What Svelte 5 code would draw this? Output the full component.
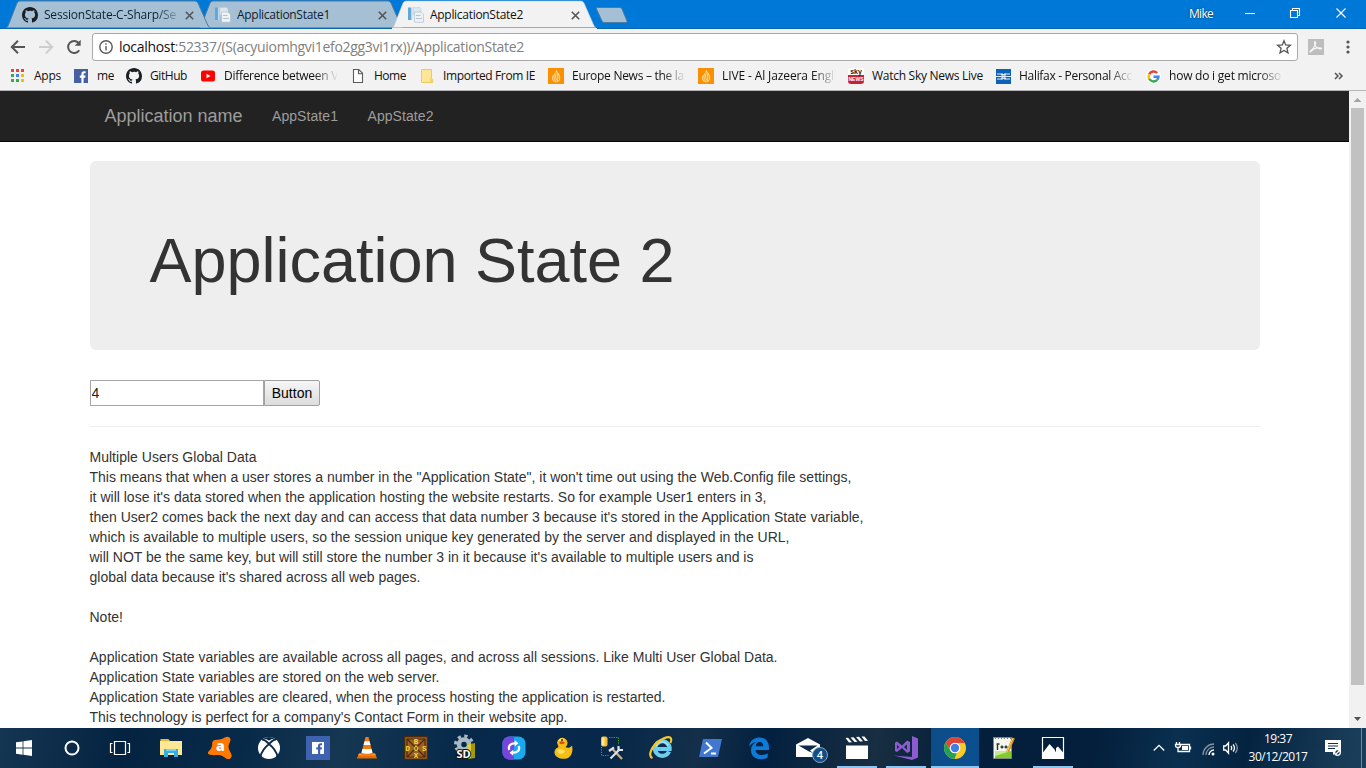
<script>
  const tabs = [
    { title: 'SessionState-C-Sharp/Se', icon: 'github', width: 132, fade: true },
    { title: 'ApplicationState1', icon: 'doc', width: 93 },
    { title: 'ApplicationState2', icon: 'doc', width: 93, active: true }
  ];

  const bookmarks = [
    { name: 'Apps', icon: 'apps', cell: 64, lead: 24, width: 27 },
    { name: 'me', icon: 'fb', cell: 52, lead: 23, width: 17 },
    { name: 'GitHub', icon: 'github', cell: 74, lead: 24, width: 37 },
    { name: 'Difference between V', icon: 'youtube', cell: 152, lead: 24, width: 114, fade: true },
    { name: 'Home', icon: 'page', cell: 69, lead: 22, width: 32 },
    { name: 'Imported From IE', icon: 'folder', cell: 127, lead: 22, width: 92 },
    { name: 'Europe News – the la', icon: 'aj', cell: 150, lead: 24, width: 112, fade: true },
    { name: 'LIVE - Al Jazeera Engl', icon: 'aj', cell: 150, lead: 24, width: 112, fade: true },
    { name: 'Watch Sky News Live', icon: 'sky', cell: 148, lead: 24, width: 111 },
    { name: 'Halifax - Personal Acc', icon: 'halifax', cell: 150, lead: 23, width: 113, fade: true },
    { name: 'how do i get microso', icon: 'google', cell: 150, lead: 23, width: 112, fade: true }
  ];

  const lines = [
    ['Multiple Users Global Data', 167],
    ['This means that when a user stores a number in the "Application State", it won\'t time out using the Web.Config file settings,', 762],
    ['it will lose it\'s data stored when the application hosting the website restarts. So for example User1 enters in 3,', 677],
    ['then User2 comes back the next day and can access that data number 3 because it\'s stored in the Application State variable,', 774],
    ['which is available to multiple users, so the session unique key generated by the server and displayed in the URL,', 700],
    ['will NOT be the same key, but will still store the number 3 in it because it\'s available to multiple users and is', 664],
    ['global data because it\'s shared across all web pages.', 331],
    ['', 0],
    ['Note!', 33.5],
    ['', 0],
    ['Application State variables are available across all pages, and across all sessions. Like Multi User Global Data.', 688],
    ['Application State variables are stored on the web server.', 350],
    ['Application State variables are cleared, when the process hosting the application is restarted.', 576],
    ['This technology is perfect for a company\'s Contact Form in their website app.', 478]
  ];

  const system = ['start', 'cortana', 'taskview'];
  const pinned = [
    { icon: 'explorer' }, { icon: 'avast' }, { icon: 'xbox' }, { icon: 'fbtile' }, { icon: 'vlc' },
    { icon: 'dosbox' }, { icon: 'sd' }, { icon: 'sync' }, { icon: 'duck' }, { icon: 'tools' },
    { icon: 'ie' }, { icon: 'powershell' }, { icon: 'edge' }, { icon: 'mail', badge: '4' },
    { icon: 'clapper', open: true }, { icon: 'vs', open: true }, { icon: 'chrome', open: true, active: true },
    { icon: 'notepad' }, { icon: 'photos', open: true }
  ];

  // Tracks the text so that it fills the given width.
  function fit(node, width) {
    if (!width) return;
    const range = document.createRange();
    range.selectNodeContents(node);
    const natural = range.getBoundingClientRect().width;
    node.style.letterSpacing = `${(width - natural) / node.textContent.length}px`;
  }
</script>

{#snippet glyph(name)}
  {#if name === 'github'}
    <svg class="i16" viewBox="0 0 16 16"><path fill="#1b1f23" d="M8 0C3.58 0 0 3.58 0 8c0 3.54 2.29 6.53 5.47 7.59.4.07.55-.17.55-.38 0-.19-.01-.82-.01-1.49-2.01.37-2.53-.49-2.69-.94-.09-.23-.48-.94-.82-1.13-.28-.15-.68-.52-.01-.53.63-.01 1.08.58 1.23.82.72 1.21 1.87.87 2.33.66.07-.52.28-.87.51-1.07-1.78-.2-3.64-.89-3.64-3.95 0-.87.31-1.59.82-2.15-.08-.2-.36-1.02.08-2.12 0 0 .67-.21 2.2.82A7.6 7.6 0 0 1 8 3.86c.68 0 1.36.09 2 .27 1.53-1.04 2.2-.82 2.2-.82.44 1.1.16 1.92.08 2.12.51.56.82 1.27.82 2.15 0 3.07-1.87 3.75-3.65 3.95.29.25.54.73.54 1.48 0 1.07-.01 1.93-.01 2.2 0 .21.15.46.55.38A8 8 0 0 0 16 8c0-4.42-3.58-8-8-8z"/></svg>
  {:else if name === 'doc'}
    <svg class="i16" viewBox="0 0 16 16"><path fill="#62a8d6" d="M0 .5h3v12.500H0z"/><path fill="#b9dcf2" d="M3 .5h1.500V13H3z"/><path fill="#dbe6ef" stroke="#b9cad8" stroke-width=".5" d="M5 .5h7L13 2v6H5z"/><path fill="#eef2f6" stroke="#a9b8c5" stroke-width=".6" d="M6.500 5h6.500l2.500 2.500v7.700h-9z"/><path stroke="#b5c4d2" d="M8 8.500h4.500M8 11.500h6"/></svg>
  {:else if name === 'apps'}
    <svg class="i14" viewBox="0 0 14 14"><path fill="#ea4335" d="M1 0h3v3H1zM6 0h3v3H6zM11 0h3v3h-3z"/><path fill="#34a853" d="M1 5h3v3H1zM1 10h3v3H1z"/><path fill="#4285f4" d="M6 5h3v3H6z"/><path fill="#34a853" d="M6 10h3v3H6z"/><path fill="#fbbc05" d="M11 5h3v3h-3zM11 10h3v3h-3z"/></svg>
  {:else if name === 'fb'}
    <svg class="i14" viewBox="0 0 14 14"><path fill="#4460a0" d="M0 0h14v14H0z"/><path fill="#fff" d="M7.400 14V8.700H5.800V6.500h1.600V5c0-1.700 1-2.700 2.600-2.700h1.600v2h-1c-.8 0-1 .4-1 1v1.200h2l-.3 2.200H9.600V14z"/></svg>
  {:else if name === 'youtube'}
    <svg class="i16" viewBox="0 0 16 16"><rect x="1" y="2.500" width="14" height="11" rx="2.600" fill="#f00"/><path fill="#fff" d="M6.500 5.700v4.600l4-2.300z"/></svg>
  {:else if name === 'page'}
    <svg class="i14" viewBox="0 0 14 14"><path fill="#fff" stroke="#5a5a5a" stroke-width="1.100" d="M1.500.5h5.300l3.700 3.700v9.300h-9zM6.500.7v4h4"/></svg>
  {:else if name === 'folder'}
    <svg class="i14" viewBox="0 0 14 14"><path fill="#ffe594" stroke="#eacb62" d="M.5.5h10v9l1.200.8v3.200H.5z"/><path fill="none" stroke="#e9c552" d="M10 9.500v4"/></svg>
  {:else if name === 'aj'}
    <svg class="i16" viewBox="0 0 16 16"><path fill="#fa9000" d="M0 0h16v16H0z"/><path fill="#ffd28a" d="M8.300 1.500c1 2.500 4.200 5 4 8.200-.1 2.300-1.800 4.600-4.100 4.900-2.600-.3-4.400-2.500-4.300-4.800.1-2.200 2.200-3 3.100-5z"/><path fill="none" stroke="#fa9000" stroke-width=".8" d="M8.200 4c-1 2 1.500 4 0 6s1 2.500 0 4M6 7.500c1 2-1.500 3 .5 5M10.500 7.500c-1 2 1 3-.5 5"/></svg>
  {:else if name === 'sky'}
    <svg class="i16" viewBox="0 0 16 16"><rect width="16" height="16" rx="3" fill="#fff"/><path fill="#cb2030" d="M0 7h16v6q0 3-3 3H3q-3 0-3-3z"/><text x="8" y="5.500" class="skytop">sky</text><text x="8" y="13" class="skybot">NEWS</text></svg>
  {:else if name === 'halifax'}
    <svg class="i15" viewBox="0 0 15 15"><path fill="#0a63b7" d="M0 0h15v15H0z"/><path fill="none" stroke="#dcebf9" stroke-width="1.100" d="M1 5h4l1.500 2M14 5h-4L8.500 7M0 7.500h15M1 10h4l1.500-2M14 10h-4L8.500 8M5.500 4.500L7.500 6l2-1.500M5.500 10.500L7.500 9l2 1.500"/></svg>
  {:else if name === 'google'}
    <svg class="i15" viewBox="0 0 15 15"><circle cx="7.500" cy="7.500" r="7.500" fill="#fff"/><g fill="none" stroke-width="2.400"><path stroke="#ea4335" d="M3.200 5.200A4.900 4.900 0 0 1 11.200 4"/><path stroke="#fbbc05" d="M3.200 5.200a4.900 4.900 0 0 0 0 4.600"/><path stroke="#34a853" d="M3.200 9.800a4.900 4.900 0 0 0 7.700 1.300"/><path stroke="#4285f4" d="M10.900 11.100a4.900 4.900 0 0 0 1.600-3.300H7.500"/></g></svg>
  {/if}
{/snippet}

{#snippet app(name)}
  <svg class="i24" viewBox="0 0 24 24">
    {#if name === 'start'}
      <path fill="#fff" d="M4 6.300l6.600-.9v6.200H4zM11.400 5.300L20 4v7.600h-8.600zM4 12.400h6.600v6.300L4 17.800zM11.400 12.400H20V20l-8.600-1.200z"/>
    {:else if name === 'cortana'}
      <circle cx="12" cy="12" r="6.500" fill="none" stroke="#fff" stroke-width="2"/>
    {:else if name === 'taskview'}
      <path fill="none" stroke="#fff" stroke-width="1.200" d="M6.500 5.500h11v13h-11zM4.500 7.500h-2v9h2M19.500 7.500h2v9h-2"/>
    {:else if name === 'explorer'}
      <path fill="#e8bb3c" d="M1.500 3h8l1.500 2H22v3H1.500z"/><path fill="#ffe793" d="M1 5h22v14H1z"/><path fill="#35aee4" d="M5 13h14v8h-4v-4H9v4H5z"/><path fill="#79d0f2" d="M7 13h10v2H7z"/>
    {:else if name === 'avast'}
      <path fill="#ff7800" d="M.5 15.500C3.500 13 4.500 10 4.200 7c.3-2.500 2-3.300 5-3.200 3 .2 5.500-1 8-2.500C20-.3 23 1.500 22.500 4c-.3 2.500-2 4-2 7 .1 3.500 3 5.500 3.200 8.500 0 3.500-3.500 4.600-6 2.700-2.500-2-4.700-3.500-8-3.200-3 .2-6 .3-8.500-.5C-.5 18-.3 16.300.5 15.500z"/><text x="12.300" y="15.300" class="avast">a</text>
    {:else if name === 'xbox'}
      <circle cx="12" cy="12" r="11" fill="#fff"/><path fill="#0c2a48" d="M5.700 3C8 2.300 10 3.400 12 4.600 14 3.400 16 2.300 18.300 3c-3-2.700-9.600-2.700-12.600 0z"/><path fill="none" stroke="#0c2a48" stroke-width="1.900" d="M3.500 20.500c1-4.700 4.800-9.500 8.500-12.500 3.700 3 7.500 7.800 8.500 12.500M5 3.500c3 0 5 2.500 7 4.500 2-2 4-4.500 7-4.500"/>
    {:else if name === 'fbtile'}
      <path fill="#3f62b0" d="M0 0h24v24H0z"/><path fill="#fff" d="M6 6h12v12H6z"/><path fill="#3f62b0" d="M12 18v-4.500h-1.700v-2.200H12V10c0-1.800 1-2.800 2.700-2.800H16v2h-1c-.7 0-.8.400-.8.900v1.200H16l-.3 2.200h-1.500V18z"/>
    {:else if name === 'vlc'}
      <path fill="#e46b00" d="M4 17.500h16l2.200 5H1.800z"/><path fill="#ff9c2b" d="M4 17.500h16l.8 2H3.200z"/><path fill="#f37a10" d="M10.500 1h3L18 18.500c-3 2-9 2-12 0z"/><path fill="#fff" d="M9.600 5.200h4.900l1 3.900H8.600zM7.500 13h9l1 3.700c-3 1.500-8 1.500-11 0z"/>
    {:else if name === 'dosbox'}
      <path fill="#9b6127" d="M0 0h24v24H0z"/><path fill="none" stroke="#4e2909" stroke-width="1.200" d="M.6.6h22.800v22.800H.6zM3 3h18v18H3zM3 3l18 18M21 3L3 21"/><text x="12" y="7.500" class="dos">B</text><text x="12" y="14.500" class="dos" textLength="21">DOS</text><text x="12" y="21.500" class="dos">X</text>
    {:else if name === 'sd'}
      <g fill="none" stroke="#a9bac4"><circle cx="11" cy="8.500" r="5" stroke-width="4.500"/><circle cx="11" cy="8.500" r="8.500" stroke-width="3" stroke-dasharray="3.300 3.370"/></g><path fill="#a8960e" d="M15 8.500l7-1.500v15l-7 1z"/><path fill="#dccf3c" d="M15 8.500l3-.7V22l-3 .5z"/><text x="10.500" y="21.500" class="sd">SD</text>
    {:else if name === 'sync'}
      <rect x=".5" y=".5" width="23" height="23" rx="7" fill="#19a9ee"/><path fill="#7a43dc" d="M12 .5v23H7.500a7 7 0 0 1-7-7v-9a7 7 0 0 1 7-7z"/><path fill="none" stroke="#fff" stroke-width="2.300" d="M13.500 7.300C8.500 7 5.800 10 7.300 14M10.500 16.700c5 .3 7.700-2.700 6.200-6.700"/><path fill="#fff" d="M12.700 4.300L16.500 7.300l-3.800 3zM11.300 13.700L7.500 16.700l3.800 3z"/>
    {:else if name === 'duck'}
      <path fill="#f5bd16" d="M6 6.500a5.300 5.300 0 1 1 8.500 4.800c3 1 4.500.5 6.500-1.800 1.500 5.500-.5 13.300-7.500 13.300C6.500 23 3 19.500 3.500 15.500 4 13 6 11.800 7.500 11z"/><path fill="#ffe15e" d="M7.500 5a3 3 0 0 1 5-2c1 1 .5 2-1 2zM6 14c2-1 6-1 8 1-1 3-5 4-7 2z"/><path fill="#df4b13" d="M8.500 5.800c2.500-1.300 4.500 0 5.500 1-1.500 1.500-4 2-5.500.7z"/><circle cx="11" cy="4" r="1" fill="#222"/>
    {:else if name === 'tools'}
      <path fill="none" stroke="#4fa82c" stroke-dasharray="1.200 1.200" d="M9 1.500h9.500V9M1.500 11v8.500H9"/><rect x="1" y=".5" width="6.500" height="10" rx="2" fill="#f4bc32"/><path fill="#ffe693" d="M2 1.500h2.500v8H2z"/><path stroke="#c9b08a" stroke-width="2.200" d="M12.500 13L22 23"/><path stroke="#dde2e6" stroke-width="2.200" d="M20 13L10.500 22.500"/><path fill="none" stroke="#dde2e6" stroke-width="2.200" d="M9 15l5-3.500M18.500 10v4H23"/>
    {:else if name === 'ie'}
      <path fill="none" stroke="#6bcdf0" stroke-width="4.200" d="M20 15.500A7.300 7.300 0 1 1 20.600 13H7"/><path fill="none" stroke="#b4e9f9" stroke-width="1.300" d="M7 10.500a6.500 6.500 0 0 1 12-1"/><path fill="none" stroke="#f5c72b" stroke-width="2.200" d="M3.500 22C-2 20 3 9.500 11 4.500c4-2.600 9.500-5 11-2 .7 1.400.2 3-.5 4.500"/>
    {:else if name === 'powershell'}
      <path fill="#4277cf" d="M5 3h19l-4 18H1z"/><path fill="none" stroke="#fff" stroke-width="2" d="M8 6.500l5.500 5.500L6 17.500M13 17.500h5"/>
    {:else if name === 'edge'}
      <path fill="#0d7bd8" d="M2 10.500C3 5 6.800 1.500 12 1.500c6.500 0 10 4.500 10 10v2.500H8.500c.2 3.500 3 5 6.200 5 2.300 0 4.300-.7 6-1.700v4.200c-2 1.200-4.500 1.700-7 1.700-5.800 0-9.700-3.500-9.700-9 0-4 2-6.800 5.500-8.300C7.300 6 4 7.500 2 10.500zm6.700-.2h7.600C16.200 7.500 15 6 12.700 6c-2.200 0-3.700 1.700-4 4.300z"/>
    {:else if name === 'mail'}
      <path fill="#fff" d="M0 8.500L12 2l12 6.500V21H0z"/><path fill="#0c2a48" d="M2.500 9.500h19L14 14.500l3 2.500-4.500-1.800z"/>
    {:else if name === 'clapper'}
      <path fill="#fff" d="M1 9.500h22V23H1zM.5 2L3 1.700l4 4.500-3 .3zM5.500 1.500l3-.2 4 4.500-3 .2zM11 1l3-.2 4 4.500-3 .2zM16.500.6l3-.2 3.500 4.300-3 .2z"/>
    {:else if name === 'vs'}
      <path fill="#8c5bd0" fill-rule="evenodd" d="M18 0l6 2.500v19L18 24 0 19.500 18 21zM1 6.500l2-1 5 4 5-5 3 1.500v9.500L13 17l-5-5-5 4-2-1zm2 2.500v4l2.300-2zm10-.5L10 11l3 2.700z"/>
    {:else if name === 'chrome'}
      <circle cx="12" cy="12" r="11" fill="#f8cb25"/><path fill="#dc4638" d="M2.500 6.500a11 11 0 0 1 19 0L22 7H12a5 5 0 0 0-4.700 6.700z"/><path fill="#22a05a" d="M2.500 6.500L7.300 14.200a5 5 0 0 0 6.500 2.600L11.500 23A11 11 0 0 1 2.500 6.500z"/><circle cx="12" cy="12" r="5.300" fill="#fff"/><circle cx="12" cy="12" r="4.200" fill="#427ee8"/>
    {:else if name === 'notepad'}
      <path fill="#f5f7ef" stroke="#7d8788" d="M1.500 1.500h18v21h-18z"/><path fill="#80cc28" d="M3 15h16v7H3z"/><path fill="#c5e994" d="M3 15h16L3 20z"/><path stroke="#777" stroke-dasharray="1 2" d="M3 2.500h16"/><path stroke="#263329" stroke-width="1.400" d="M5.500 7.500V14M4.500 8h3M8.500 11h3M10 9.500v3M12.500 11h3M14 9.500v3"/><path stroke="#d78f20" stroke-width="3" d="M21.500 2l-6 14"/><path stroke="#f8d255" d="M21 2l-6 14"/>
    {:else if name === 'photos'}
      <path fill="none" stroke="#fff" stroke-width="1.200" d="M1.500 1.500h21v21h-21z"/><path fill="#fff" d="M2 16.500L8.500 8l5.500 6v1.500h1V12l2-1.500 5.500 6.500v5H2z"/>
    {/if}
  </svg>
{/snippet}

<div class="screen">
  <header class="titlebar">
    <div class="tabs">
      {#each tabs as tab}
        <div class="tab" class:active={tab.active}>
          <svg class="shape" viewBox="0 0 205 28"><path d="M0 27.500C1.500 27.500 2 26 3 23.500L11 3Q12 1 14 1H189Q191 1 192 3L201 23.500Q202.500 27.500 204 27.500"/></svg>
          <span class="tabicon">{@render glyph(tab.icon)}</span>
          <span class="tabtitle" class:fade={tab.fade}><span use:fit={tab.width}>{tab.title}</span></span>
          <svg class="close" viewBox="0 0 9 9"><path d="M.8.8l7.400 7.400M8.200.8L.8 8.200"/></svg>
        </div>
      {/each}
      <svg class="newtab" viewBox="0 0 34 17"><path d="M2 .5h23q1.500 0 2 1.500l5 12q.5 1.500-1 1.500H9q-1.500 0-2-1.500L1.500 2Q1 .5 2 .5z"/></svg>
    </div>
    <div class="window">
      <span class="user"><span use:fit={24}>Mike</span></span>
      <svg viewBox="0 0 12 12"><path d="M1 6.500h10"/></svg>
      <svg viewBox="0 0 12 12"><path d="M1.500 3.500h7v7h-7zM3.500 3V1.500h7v7H9"/></svg>
      <svg viewBox="0 0 12 12"><path d="M1.500 1.500l9 9M10.500 1.500l-9 9"/></svg>
    </div>
  </header>

  <div class="toolbar">
    <svg class="nav" viewBox="0 0 16 16"><path d="M15 8H2M8 1.800L1.800 8 8 14.200"/></svg>
    <svg class="nav off" viewBox="0 0 16 16"><path d="M1 8h13M8 1.800L14.200 8 8 14.200"/></svg>
    <svg class="nav reload" viewBox="0 0 16 16"><path d="M13.200 11.200A6 6 0 1 1 12.600 4"/><path class="solid" d="M14.700.8v6H8.700z"/></svg>
    <div class="omnibox">
      <svg class="info" viewBox="0 0 14 14"><circle cx="7" cy="7" r="6.200"/><path d="M7 6v4.500M7 3.300v1.500"/></svg>
      <span class="url"><span use:fit={405}><b>localhost</b>:52337/(S(acyuiomhgvi1efo2gg3vi1rx))/ApplicationState2</span></span>
      <svg class="star" viewBox="0 0 14 14"><path d="M7 .8l1.700 4.100 4.700.4-3.500 3 1.100 4.600L7 10.500l-4 2.400 1.100-4.600-3.500-3 4.700-.4z"/></svg>
    </div>
    <svg class="pdf" viewBox="0 0 16 16"><path fill="#bdbdbd" d="M0 0h16v16H0z"/><path fill="none" stroke="#f5f5f5" stroke-width="1.200" d="M7 2.500c2 0 0 6-4.500 9.500-1 .8-.5 1.500.5.500 2-2.500 6-4 10-3.500 1.500.4 0 1.500-2 .7C8 8.500 6.500 6 6.500 3.500z"/></svg>
    <svg class="menu" viewBox="0 0 4 14"><circle cx="2" cy="2" r="1.600"/><circle cx="2" cy="7" r="1.600"/><circle cx="2" cy="12" r="1.600"/></svg>
  </div>

  <div class="bookmarks">
    {#each bookmarks as mark}
      <div class="mark" style:width="{mark.cell}px">
        <span class="markicon" style:width="{mark.lead}px">{@render glyph(mark.icon)}</span>
        <span class="marktext" class:fade={mark.fade}><span use:fit={mark.width}>{mark.name}</span></span>
      </div>
    {/each}
    <svg class="more" viewBox="0 0 9 8"><path d="M1 1l3 3-3 3M5 1l3 3-3 3"/></svg>
  </div>

  <div class="viewport">
    <div class="page">
      <nav class="navbar">
        <span class="brand"><span use:fit={138}>Application name</span></span>
        <span class="link"><span use:fit={66}>AppState1</span></span>
        <span class="link"><span use:fit={66}>AppState2</span></span>
      </nav>
      <main class="container">
        <section class="jumbotron"><h1><span use:fit={525}>Application State 2</span></h1></section>
        <div class="form"><input value="4" /><button>Button</button></div>
        <hr />
        {#each lines as [text, width]}
          <p><span use:fit={width}>{text}</span></p>
        {/each}
      </main>
    </div>
    <div class="scrollbar">
      <svg viewBox="0 0 17 17"><path fill="#a3a3a3" d="M4.500 11h8l-4-4z"/></svg>
      <div class="thumb"></div>
      <svg viewBox="0 0 17 17"><path fill="#505050" d="M5 6h7l-3.500 4z"/></svg>
    </div>
  </div>

  <footer class="taskbar">
    {#each system as name}
      <div class="sys">{@render app(name)}</div>
    {/each}
    <div class="pins">
      {#each pinned as item}
        <div class="pin" class:open={item.open} class:current={item.active}>
          {@render app(item.icon)}
          {#if item.badge}<span class="badge">{item.badge}</span>{/if}
        </div>
      {/each}
    </div>
    <div class="tray">
      <svg class="chev" viewBox="0 0 12 12"><path d="M.8 8.500L6 3.300l5.200 5.200"/></svg>
      <svg class="batt" viewBox="0 0 16 12"><path d="M6 2.500h8.500v7h-8M15.500 4.500v3M1.500 0v2.500M4.500 0v2.500M.5 2.500h5v1q0 2-2.500 2t-2.500-2zM3 5.500v4h3.500"/><path class="fill" d="M7 4h6v4H7z"/></svg>
      <svg class="wifi" viewBox="0 0 13 13"><path class="dim" d="M1 12A11 11 0 0 1 12 1M4 12a8 8 0 0 1 8-8"/><path d="M7 12a5 5 0 0 1 5-5"/><circle class="fill" cx="11" cy="11" r="1.500"/></svg>
      <svg class="vol" viewBox="0 0 16 12"><path d="M.7 4h2L5.500.8v10.400L2.700 8h-2zM8 4q1.500 2 0 4M10 2.500q3 3.500 0 7"/><path class="dim" d="M12.300 1q4 5 0 10"/></svg>
      <div class="clock"><span><span use:fit={28}>19:37</span></span><span><span use:fit={59}>30/12/2017</span></span></div>
      <svg class="note" viewBox="0 0 16 16"><path fill="#fff" d="M0 0h16v12h-4l-4 3v-3H0z"/><path stroke="#12314d" stroke-width="1.200" d="M3 3.500h10M3 6h10M3 8.500h7"/><circle cx="12.500" cy="12.500" r="2.800" fill="#12314d" stroke="#fff"/><path stroke="#fff" d="M10.500 14.500l4-4"/></svg>
    </div>
    <div class="peek"></div>
  </footer>
</div>

<style>
  :global(body) { overflow: hidden; background: #fff; }
  * { box-sizing: border-box; }
  svg { display: block; flex: none; overflow: visible; }
  .screen { width: 1366px; height: 768px; display: flex; flex-direction: column; font: 12px/16px "Open Sans", "Noto Sans", sans-serif; color: #111; white-space: nowrap; overflow: hidden; }
  .i24 { width: 24px; height: 24px; }
  .i16 { width: 16px; height: 16px; }
  .i15 { width: 15px; height: 15px; }
  .i14 { width: 14px; height: 14px; }

  .titlebar { height: 29px; flex: none; background: #0078d7; display: flex; justify-content: space-between; border-bottom: 1px solid #0a64ae; position: relative; }
  .tabs { display: flex; padding-left: 6px; }
  .tab { width: 204px; height: 28px; margin-right: -11px; padding: 2px 0 0 16px; position: relative; z-index: 1; display: flex; align-items: center; color: #0d222f; }
  .tab + .tab { z-index: 0; }
  .tab.active { z-index: 2; color: #111; height: 29px; padding-bottom: 1px; }
  .shape { position: absolute; left: 0; top: 0; width: 205px; height: 28px; }
  .shape path { fill: #a5c0d4; stroke: #4e7ba0; stroke-width: 1; }
  .active .shape { height: 29px; border-bottom: 1px solid #f2f2f2; }
  .tab.active .shape path { fill: #f2f2f2; stroke: #b9cddf; stroke-width: .6; }
  .tabicon { width: 22px; position: relative; }
  .tabtitle { width: 132px; margin-right: 9px; position: relative; overflow: hidden; }
  .fade { -webkit-mask-image: linear-gradient(to right, #000 calc(100% - 24px), transparent); mask-image: linear-gradient(to right, #000 calc(100% - 24px), transparent); }
  .tabtitle.fade { -webkit-mask-image: linear-gradient(to right, #000 calc(100% - 20px), #0004); mask-image: linear-gradient(to right, #000 calc(100% - 20px), #0004); }
  .close { width: 9px; height: 9px; position: relative; }
  .close path { stroke: #555; stroke-width: 1.600; }
  .newtab { width: 34px; height: 17px; margin: 7px 0 0 10px; fill: #a5c0d4; stroke: #4e7ba0; }
  .window { display: flex; align-items: center; width: 177px; padding: 0 0 2px; }
  .window svg { width: 12px; height: 12px; fill: none; stroke: #fff; stroke-width: 1.100; margin-right: 33px; }
  .user { width: 55px; color: #fff; padding-top: 2px; text-shadow: 0 0 2px #123; }
  .window svg:last-child { margin-right: 0; margin-left: 1px; }

  .toolbar { height: 33px; flex: none; background: #f2f2f2; display: flex; align-items: center; padding: 3px 0 0 10px; }
  .nav { width: 16px; height: 16px; margin-right: 12px; fill: none; stroke: #555; stroke-width: 2; }
  .nav.off { stroke: #cecece; }
  .nav.reload { margin-right: 10px; }
  .nav .solid { fill: #555; stroke: none; }
  .omnibox { width: 1206px; height: 28px; border: 1px solid #a9a9a9; border-radius: 3px; background: #fff; display: flex; align-items: center; padding: 0 6px; }
  .info { width: 14px; height: 14px; fill: none; stroke: #5a5a5a; stroke-width: 1.400; }
  .url { flex: 1; padding-left: 6px; font-size: 14px; line-height: 20px; color: #808080; }
  .url b { font-weight: 400; color: #111; }
  .star { width: 14px; height: 14px; fill: none; stroke: #555; stroke-width: 1.300; }
  .pdf { width: 16px; height: 16px; margin-left: 10px; }
  .menu { width: 4px; height: 14px; margin-left: 22px; fill: #555; }

  .bookmarks { height: 29px; flex: none; background: #f2f2f2; border-bottom: 1px solid #b6b4b6; display: flex; align-items: center; padding-left: 10px; }
  .mark { display: flex; align-items: center; flex: none; }
  .markicon { flex: none; }
  .marktext { overflow: hidden; }
  .marktext.fade { width: 114px; }
  .more { width: 9px; height: 8px; margin-left: 38px; fill: none; stroke: #555; stroke-width: 1.500; }
  .skytop, .skybot { font: bold 7px "Liberation Sans", sans-serif; text-anchor: middle; fill: #222; }
  .skybot { font-size: 5px; fill: #fff; }
  .avast { font: 800 14px "Open Sans", sans-serif; text-anchor: middle; fill: #fff; }
  .dos { font: bold 7.500px "Liberation Mono", monospace; text-anchor: middle; fill: #ffd92e; }
  .sd { font: bold 11px "Open Sans", sans-serif; text-anchor: middle; fill: #fff; stroke: #111; stroke-width: 2px; paint-order: stroke; }

  .viewport { height: 637px; flex: none; display: flex; }
  .page { width: 1349px; height: 637px; overflow: hidden; background: #fff; color: #333; font: 14px/20px "Liberation Sans", Arial, sans-serif; }
  .navbar { height: 51px; background: #222; border-bottom: 1px solid #080808; display: flex; align-items: center; padding-left: 104.500px; color: #9d9d9d; }
  .brand { width: 167.500px; font-size: 18px; }
  .link { width: 95.500px; }
  .container { width: 1170px; margin: 19px 0 0 89.500px; }
  .jumbotron { height: 189px; border-radius: 6px; background: #eee; padding: 65px 60px 0; }
  h1 { margin: 0; font-size: 63px; line-height: 69px; font-weight: 500; }
  .form { display: flex; margin-top: 30px; height: 26px; }
  input { width: 174px; height: 26px; border: 1px solid #a6a6a6; padding: 1px; font: 14px "Liberation Sans", Arial, sans-serif; color: #222; border-radius: 0; }
  button { width: 56px; height: 26px; border: 1px solid #a0a0a0; border-radius: 0 2px 2px 0; padding: 0 0 0 1px; background: linear-gradient(#f6f6f6, #dcdcdc); font: 14px "Liberation Sans", Arial, sans-serif; color: #000; }
  hr { border: 0; height: 1px; background: #eee; margin: 20px 0; }
  p { margin: 0; height: 20px; }
  .scrollbar { width: 17px; background: #f1f1f1; display: flex; flex-direction: column; align-items: center; justify-content: space-between; }
  .scrollbar svg { width: 17px; height: 17px; }
  .thumb { width: 13px; height: 577px; background: #c1c1c1; margin-bottom: 26px; }

  .taskbar { height: 40px; flex: none; display: flex; color: #fff; background: linear-gradient(100deg, #153652 0, #042341 9%, #082a49 18%, #153752 25%, #06294a 34%, #08284a 45%, #132f49 51%, #02203f 56%, #182e41 64%, #031f3b 70%, #031f3b 80%, #0a3050 86%, #042341 91%, #1a3e5a 99%); }
  .sys { width: 48px; display: flex; align-items: center; justify-content: center; }
  .pins { display: flex; margin-left: 3px; }
  .pin { width: 48px; margin-right: 1px; position: relative; display: flex; align-items: center; justify-content: center; }
  .open::after { content: ""; position: absolute; left: 4px; right: 4px; bottom: 0; height: 2px; background: #8dc4f0; }
  .current { background: linear-gradient(100deg, #0d4c87, #095090); }
  .current::after { left: 0; right: 0; }
  .badge { position: absolute; left: 28px; top: 19px; width: 16px; height: 16px; border-radius: 50%; background: #154e82; border: 1px solid #7ea6c8; font-size: 11px; line-height: 14px; text-align: center; font-weight: 600; }
  .tray { display: flex; align-items: center; margin-left: 75px; }
  .tray svg { fill: none; stroke: #fff; stroke-width: 1.300; }
  .tray .fill { fill: #fff; stroke: none; }
  .tray .dim { stroke: #8293a1; }
  .chev { width: 12px; height: 12px; }
  .batt { width: 16px; height: 12px; margin-left: 10px; }
  .wifi { width: 13px; height: 13px; margin-left: 11px; margin-top: 3px; }
  .vol { width: 16px; height: 12px; margin-left: 8px; }
  .clock { width: 60px; margin-left: 9px; display: flex; flex-direction: column; align-items: center; line-height: 18px; }
  .tray .note { width: 16px; height: 16px; margin-left: 17px; stroke: none; }
  .peek { width: 1px; height: 40px; margin: 0 4px 0 auto; background: #6f8798; }
</style>
